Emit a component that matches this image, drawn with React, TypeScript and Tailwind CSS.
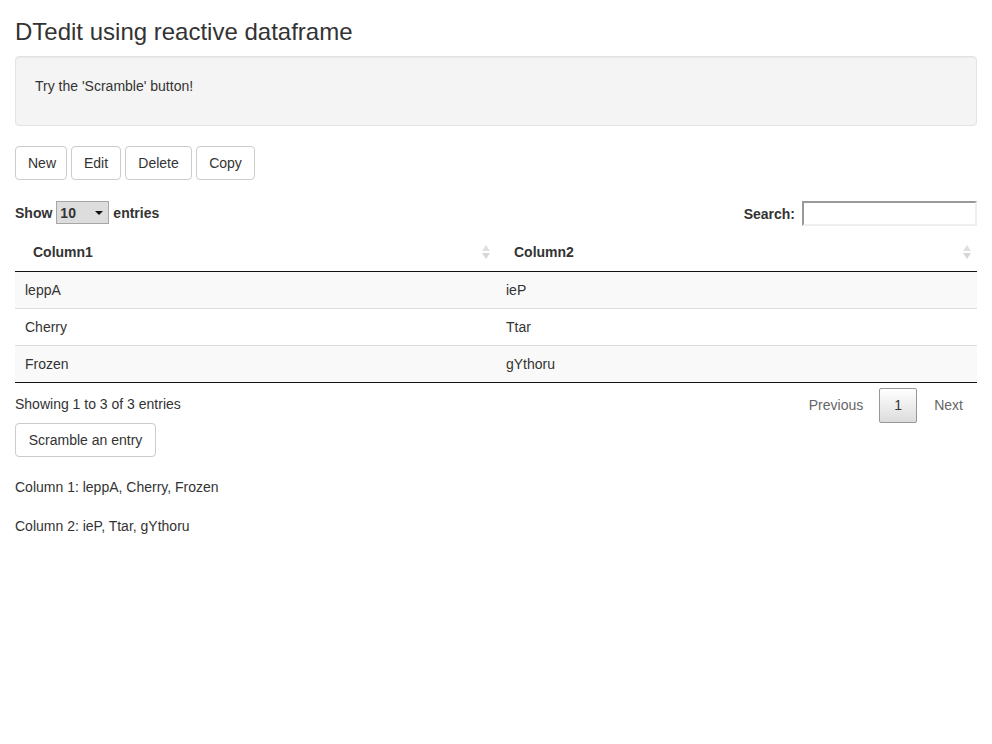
const rows = [
  ["leppA", "ieP"],
  ["Cherry", "Ttar"],
  ["Frozen", "gYthoru"],
];

function SortIcon() {
  return (
    <svg width="8" height="14" viewBox="0 0 8 14" className="shrink-0">
      <path d="M4 0 L8 6 L0 6 Z" fill="#e0e0e0" />
      <path d="M4 14 L8 8 L0 8 Z" fill="#d6d6d6" />
    </svg>
  );
}

function Btn({ label, className = "" }: { label: string; className?: string }) {
  return (
    <button
      className={`h-[34px] px-3 border border-[#ccc] rounded bg-white text-[14px] text-[#333] ${className}`}
    >
      {label}
    </button>
  );
}

export default function App() {
  return (
    <div className="px-[15px] text-[14px] leading-[20px] text-[#333] font-['Liberation_Sans',Arial,sans-serif] bg-white min-h-[744px]">
      <h2 className="text-[24px] leading-[26px] mt-[19px] mb-[11px] font-normal">
        DTedit using reactive dataframe
      </h2>
      <div className="bg-[#f4f4f4] border border-[#e3e3e3] rounded px-[19px] pt-[19px] pb-[29px] shadow-[inset_0_1px_1px_rgba(0,0,0,0.05)]">
        <p>Try the 'Scramble' button!</p>
      </div>

      <div className="flex gap-1 mt-5">
        <Btn label="New" className="w-[52px]" />
        <Btn label="Edit" className="w-[50px]" />
        <Btn label="Delete" className="w-[67px]" />
        <Btn label="Copy" className="w-[59px]" />
      </div>

      <div className="flex items-center justify-between mt-[21px]">
        <div className="flex items-center gap-1 font-bold -mt-[2px]">
          <span>Show</span>
          <div className="flex items-center justify-between w-[53px] h-[23px] bg-[#ddd] border border-[#a6a6a6] pl-[3px] pr-[5px]">
            <span className="font-bold">10</span>
            <svg width="8" height="4" viewBox="0 0 8 4">
              <path d="M0 0 L8 0 L4 4 Z" fill="#111" />
            </svg>
          </div>
          <span>entries</span>
        </div>
        <div className="flex items-center gap-[7px] font-bold">
          <span>Search:</span>
          <div className="w-[175px] h-[25px] border-2 border-t-[#999] border-l-[#999] border-b-[#eee] border-r-[#eee] bg-white" />
        </div>
      </div>

      <table className="w-full border-collapse mt-[7px]">
        <thead>
          <tr className="border-b border-[#111]">
            <th className="text-left font-bold h-[38px] pl-[18px] pr-[6px] w-1/2">
              <div className="flex items-center justify-between">
                <span>Column1</span>
                <SortIcon />
              </div>
            </th>
            <th className="text-left font-bold h-[38px] pl-[18px] pr-[6px]">
              <div className="flex items-center justify-between">
                <span>Column2</span>
                <SortIcon />
              </div>
            </th>
          </tr>
        </thead>
        <tbody>
          {rows.map((r, i) => (
            <tr
              key={i}
              className={`${i % 2 === 0 ? "bg-[#f9f9f9]" : "bg-white"} ${
                i === rows.length - 1 ? "border-b border-[#111]" : "border-b border-[#ddd]"
              }`}
            >
              <td className="h-[37px] px-[10px]">{r[0]}</td>
              <td className="h-[37px] px-[10px]">{r[1]}</td>
            </tr>
          ))}
        </tbody>
      </table>

      <div className="flex items-start justify-between">
        <div className="pt-[11px]">Showing 1 to 3 of 3 entries</div>
        <div className="flex items-center pt-[5px] pr-[14px] text-[#666]">
          <span className="px-4">Previous</span>
          <span className="w-[38px] h-[35px] flex items-center justify-center border border-[#979797] rounded-[2px] bg-gradient-to-b from-white to-[#dcdcdc] text-[#333]">
            1
          </span>
          <span className="pl-[17px]">Next</span>
        </div>
      </div>

      <Btn label="Scramble an entry" className="w-[141px]" />

      <p className="mt-[20px]">Column 1: leppA, Cherry, Frozen</p>
      <p className="mt-[19px]">Column 2: ieP, Ttar, gYthoru</p>
    </div>
  );
}
